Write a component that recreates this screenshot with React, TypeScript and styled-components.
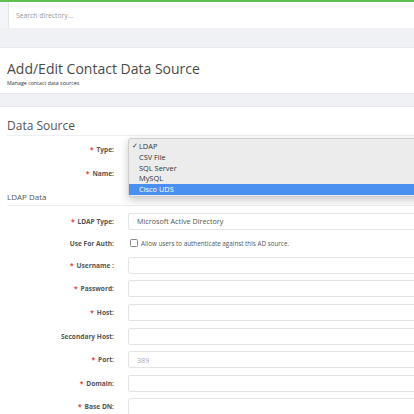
import React from "react";
import styled, { createGlobalStyle } from "styled-components";

const GlobalStyle = createGlobalStyle`
  html, body {
    margin: 0;
    padding: 0;
    background: #f0f1f4;
    font-family: "Open Sans", "Liberation Sans", sans-serif;
    color: #555;
    overflow: hidden;
  }
`;

const Page = styled.div`
  display: flex;
  flex-direction: column;
  height: 100vh;
  overflow: hidden;
`;

const TopBar = styled.div`
  display: flex;
  flex-shrink: 0;
  height: 26px;
  border-top: 2px solid #5cbf4e;
  background: #fff;
`;

const SideStub = styled.div`
  width: 8px;
  background: #f4f5f8;
  border-right: 1px solid #e6e7ea;
`;

const Search = styled.div`
  flex: 1;
  display: flex;
  align-items: center;
  padding-left: 7px;
  font-size: 6.8px;
  color: #9a9a9a;
`;

const Band = styled.div<{ h: number }>`
  flex-shrink: 0;
  height: ${({ h }) => h}px;
  background: #f0f1f4;
`;

const PageHeader = styled.div`
  flex-shrink: 0;
  background: #fff;
  height: 47px;
  padding: 11px 7px 0;
  box-sizing: border-box;
  border-top: 1px solid #e8e9ec;
  border-bottom: 1px solid #e8e9ec;
`;

const Title = styled.h1`
  margin: 0;
  font-size: 14px;
  font-weight: 400;
  line-height: 20px;
  color: #4a4a4a;
`;

const Subtitle = styled.div`
  font-size: 5.3px;
  line-height: 8px;
  color: #333;
`;

const Card = styled.div`
  flex: 1;
  min-height: 0;
  background: #fff;
  padding: 0 0 0 7px;
  border-top: 1px solid #e8e9ec;
  overflow: hidden;
`;

const SectionTitle = styled.h2<{ size: number; lh: number; top?: number }>`
  margin: 0;
  padding-top: ${({ top }) => top ?? 0}px;
  font-size: ${({ size }) => size}px;
  line-height: ${({ lh }) => lh}px;
  font-weight: 400;
  color: #555;
  border-bottom: 1px solid #eeeff1;
`;

const Form = styled.div<{ top: number }>`
  display: grid;
  grid-template-columns: 107px 500px;
  column-gap: 14px;
  row-gap: 6.6px;
  padding: ${({ top }) => top}px 0 6px;
  align-items: center;
`;

const Label = styled.label`
  text-align: right;
  font-size: 6.6px;
  font-weight: 700;
  color: #555;
`;

const Req = styled.span`
  color: #e53935;
  margin-right: 3px;
`;

const Input = styled.div<{ muted?: boolean }>`
  height: 17px;
  box-sizing: border-box;
  border: 1px solid #e4e4e4;
  border-radius: 2px;
  display: flex;
  align-items: center;
  padding-left: 8px;
  font-size: 7.2px;
  color: ${({ muted }) => (muted ? "#aaa" : "#555")};
  background: #fff;
`;

const CheckLine = styled.div`
  display: flex;
  align-items: center;
  gap: 3px;
  height: 14px;
  padding-left: 2px;
  font-size: 6.3px;
  color: #555;
`;

const Box = styled.span`
  width: 6px;
  height: 6px;
  border: 1px solid #888;
  border-radius: 1.5px;
`;

const SelectWrap = styled.div`
  position: relative;
`;

const Menu = styled.ul`
  position: absolute;
  left: 0;
  top: -3px;
  width: 360px;
  margin: 0;
  padding: 2px 0 1px;
  list-style: none;
  background: #ececec;
  border: 1px solid #cfcfcf;
  border-radius: 3px;
  box-shadow: 0 3px 8px rgba(0, 0, 0, 0.22);
  z-index: 5;
`;

const MenuItem = styled.li<{ active?: boolean }>`
  position: relative;
  height: 10.8px;
  line-height: 10.8px;
  padding-left: 10px;
  font-size: 7.4px;
  color: ${({ active }) => (active ? "#fff" : "#333")};
  background: ${({ active }) => (active ? "#4a90f0" : "transparent")};
`;

const Tick = styled.span`
  position: absolute;
  left: 3px;
  font-size: 7px;
`;

const types = ["LDAP", "CSV File", "SQL Server", "MySQL", "Cisco UDS"];

type Field = { label: string; required?: boolean; value?: string; muted?: boolean };

const ldapFields: Field[] = [
  { label: "Username :", required: true },
  { label: "Password:", required: true },
  { label: "Host:", required: true },
  { label: "Secondary Host:" },
  { label: "Port:", required: true, value: "389", muted: true },
  { label: "Domain:", required: true },
  { label: "Base DN:", required: true },
];

const FieldLabel = ({ text, required }: { text: string; required?: boolean }) => (
  <Label>
    {required && <Req>*</Req>}
    {text}
  </Label>
);

export default function App() {
  return (
    <Page>
      <GlobalStyle />
      <TopBar>
        <SideStub />
        <Search>Search directory...</Search>
      </TopBar>
      <Band h={19} />
      <PageHeader>
        <Title>Add/Edit Contact Data Source</Title>
        <Subtitle>Manage contact data sources</Subtitle>
      </PageHeader>
      <Band h={12} />
      <Card>
        <SectionTitle size={12} lh={19} top={9}>
          Data Source
        </SectionTitle>
        <Form top={5}>
          <FieldLabel text="Type:" required />
          <SelectWrap>
            <Input />
            <Menu>
              {types.map((t, i) => (
                <MenuItem key={t} active={t === "Cisco UDS"}>
                  {i === 0 && <Tick>✓</Tick>}
                  {t}
                </MenuItem>
              ))}
            </Menu>
          </SelectWrap>
          <FieldLabel text="Name:" required />
          <Input />
        </Form>
        <SectionTitle size={8} lh={17}>
          LDAP Data
        </SectionTitle>
        <Form top={7}>
          <FieldLabel text="LDAP Type:" required />
          <Input>Microsoft Active Directory</Input>
          <FieldLabel text="Use For Auth:" />
          <CheckLine>
            <Box />
            Allow users to authenticate against this AD source.
          </CheckLine>
          {ldapFields.map((f) => (
            <React.Fragment key={f.label}>
              <FieldLabel text={f.label} required={f.required} />
              <Input muted={f.muted}>{f.value}</Input>
            </React.Fragment>
          ))}
        </Form>
      </Card>
    </Page>
  );
}
